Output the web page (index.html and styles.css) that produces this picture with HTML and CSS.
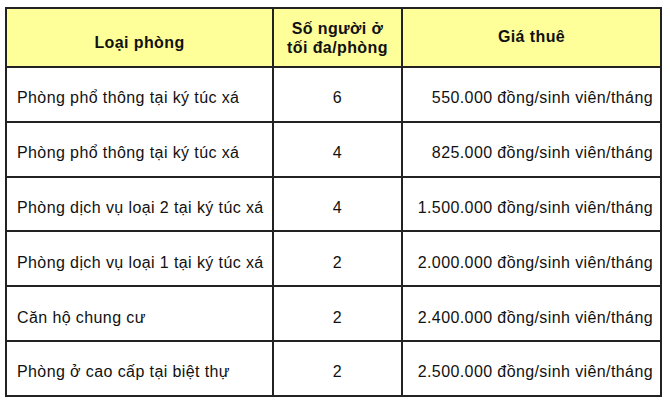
FILE: index.html
```html
<!DOCTYPE html>
<html lang="vi">
<head>
<meta charset="utf-8">
<title>Giá thuê phòng</title>
<link rel="stylesheet" href="styles.css">
</head>
<body>
<table class="price-table">
  <colgroup>
    <col class="c1">
    <col class="c2">
    <col class="c3">
  </colgroup>
  <thead>
    <tr>
      <th class="h-name">Loại phòng</th>
      <th class="h-num">Số người ở<br>tối đa/phòng</th>
      <th class="h-price">Giá thuê</th>
    </tr>
  </thead>
  <tbody>
    <tr><td class="name">Phòng phổ thông tại ký túc xá</td><td class="num">6</td><td class="price">550.000 đồng/sinh viên/tháng</td></tr>
    <tr><td class="name">Phòng phổ thông tại ký túc xá</td><td class="num">4</td><td class="price">825.000 đồng/sinh viên/tháng</td></tr>
    <tr><td class="name">Phòng dịch vụ loại 2 tại ký túc xá</td><td class="num">4</td><td class="price">1.500.000 đồng/sinh viên/tháng</td></tr>
    <tr><td class="name">Phòng dịch vụ loại 1 tại ký túc xá</td><td class="num">2</td><td class="price">2.000.000 đồng/sinh viên/tháng</td></tr>
    <tr><td class="name">Căn hộ chung cư</td><td class="num">2</td><td class="price">2.400.000 đồng/sinh viên/tháng</td></tr>
    <tr><td class="name">Phòng ở cao cấp tại biệt thự</td><td class="num">2</td><td class="price">2.500.000 đồng/sinh viên/tháng</td></tr>
  </tbody>
</table>
</body>
</html>
```
FILE: styles.css
```css
html, body {
  margin: 0;
  padding: 0;
  background: #ffffff;
}
body {
  padding: 7px 0 0 5px;
  font-family: "Liberation Sans", Arial, sans-serif;
  font-size: 16px;
  letter-spacing: 0.4px;
  color: #111111;
}
.price-table {
  border-collapse: collapse;
  table-layout: fixed;
  width: 655px;
}
.c1 { width: 267px; }
.c2 { width: 129px; }
.c3 { width: 259px; }
.price-table th,
.price-table td {
  border: 2px solid #222222;
  padding: 0;
  box-sizing: border-box;
}
.price-table th {
  background: #ffff99;
  height: 59px;
  font-weight: bold;
  text-align: center;
  line-height: 19px;
  vertical-align: middle;
}
.price-table th.h-name {
  padding-top: 10px;
}
.price-table th.h-num {
  padding-top: 0;
}
.price-table th.h-price {
  padding-bottom: 2px;
}
.price-table td {
  height: 54.8px;
  padding-top: 8px;
  vertical-align: middle;
}
.price-table td.name {
  text-align: left;
  padding-left: 10px;
}
.price-table td.num {
  text-align: center;
}
.price-table td.price {
  text-align: right;
  padding-right: 7px;
}
```
